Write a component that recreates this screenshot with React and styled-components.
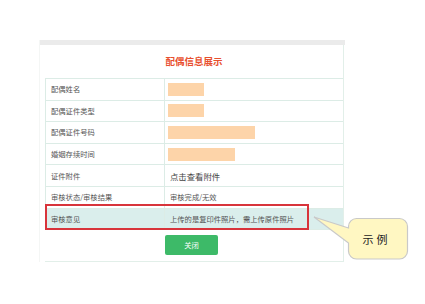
import React from "react";
import styled, { createGlobalStyle } from "styled-components";

const Global = createGlobalStyle`
  html, body { margin: 0; padding: 0; background: #fff; }
  body { font-family: "Noto Sans CJK SC", "Liberation Sans", sans-serif; }
`;

const Page = styled.div`
  position: relative;
  width: 425px;
  height: 304px;
  padding: 40px 0 0 39px;
  box-sizing: border-box;
`;

const Container = styled.div`
  width: 306px;
  border-left: 1px solid #f4f6f5;
  box-sizing: border-box;
`;

const TopBar = styled.div`
  height: 5px;
  background: #ebebeb;
`;

const Panel = styled.div`
  margin-left: 5px;
  width: 299px;
  padding-bottom: 6px;
  border-bottom: 1px solid #e2efe9;
  border-right: 1px solid #e2efe9;
  box-sizing: border-box;
`;

const Title = styled.div`
  height: 33px;
  display: flex;
  align-items: center;
  justify-content: center;
  color: #e8502e;
  font-size: 9.5px;
  font-weight: 700;
  padding-bottom: 2px;
  box-sizing: border-box;
`;

const Table = styled.div`
  border-top: 1px solid #dcece6;
  border-left: 1px solid #dcece6;
`;

const Row = styled.div`
  display: grid;
  grid-template-columns: 119px 1fr;
  height: 21.6px;
  box-sizing: border-box;
  border-bottom: 1px solid #dcece6;
  background: ${(p) => (p.$hl ? "#daeeec" : "#fff")};
`;

const Label = styled.div`
  display: flex;
  align-items: center;
  padding-left: 5px;
  font-size: 7.3px;
  color: #555;
  border-right: 1px solid #dcece6;
`;

const Value = styled.div`
  display: flex;
  align-items: center;
  padding-left: 5px;
  font-size: ${(p) => (p.$big ? "8.4px" : "7.3px")};
  color: ${(p) => (p.$big ? "#444" : "#555")};
`;

const Mask = styled.div`
  width: ${(p) => p.$w}px;
  height: 13px;
  background: #fdd4a9;
  margin-left: -2px;
`;

const Footer = styled.div`
  display: flex;
  justify-content: center;
  padding-top: 5px;
`;

const CloseButton = styled.button`
  width: 53px;
  height: 20px;
  border: none;
  border-radius: 2px;
  background: #3dba68;
  color: #fff;
  font-family: inherit;
  font-size: 7.3px;
  padding: 0;
  margin-left: -5px;
`;

const Highlight = styled.div`
  position: absolute;
  left: 45px;
  top: 204px;
  width: 264px;
  height: 26px;
  border: 2px solid #d8343b;
  box-sizing: border-box;
`;

const Bubble = styled.div`
  position: absolute;
  left: 310px;
  top: 212px;
  width: 100px;
  height: 52px;
`;

const BubbleText = styled.div`
  position: absolute;
  left: 38px;
  top: 6px;
  width: 59px;
  height: 41px;
  display: flex;
  align-items: center;
  justify-content: center;
  font-family: "Noto Sans CJK SC", serif;
  font-size: 11px;
  letter-spacing: 3px;
  color: #222;
  padding-right: 2px;
  box-sizing: border-box;
`;

const rows = [
  { label: "配偶姓名", mask: 36 },
  { label: "配偶证件类型", mask: 36 },
  { label: "配偶证件号码", mask: 87 },
  { label: "婚姻存续时间", mask: 67 },
  { label: "证件附件", text: "点击查看附件", big: true },
  { label: "审核状态/审核结果", text: "审核完成/无效" },
  { label: "审核意见", text: "上传的是复印件照片，需上传原件照片", hl: true },
];

export default function App() {
  return (
    <>
      <Global />
      <Page>
        <Container>
          <TopBar />
          <Panel>
            <Title>配偶信息展示</Title>
            <Table>
              {rows.map((r) => (
                <Row key={r.label} $hl={r.hl}>
                  <Label>{r.label}</Label>
                  <Value $big={r.big}>
                    {r.mask ? <Mask $w={r.mask} /> : r.text}
                  </Value>
                </Row>
              ))}
            </Table>
            <Footer>
              <CloseButton>关闭</CloseButton>
            </Footer>
          </Panel>
        </Container>
        <Highlight />
        <Bubble>
          <svg width="100" height="52" viewBox="0 0 100 52">
            <path
              d="M46.5 6.5 H89.5 A8 8 0 0 1 97.5 14.5 V39 A8 8 0 0 1 89.5 47 H46.5 A8 8 0 0 1 38.5 39 V31 L4 5 L38.5 16 V14.5 A8 8 0 0 1 46.5 6.5 Z"
              fill="#fff7c2"
              stroke="#c9c9c9"
              strokeWidth="1.2"
            />
          </svg>
          <BubbleText>示例</BubbleText>
        </Bubble>
      </Page>
    </>
  );
}
